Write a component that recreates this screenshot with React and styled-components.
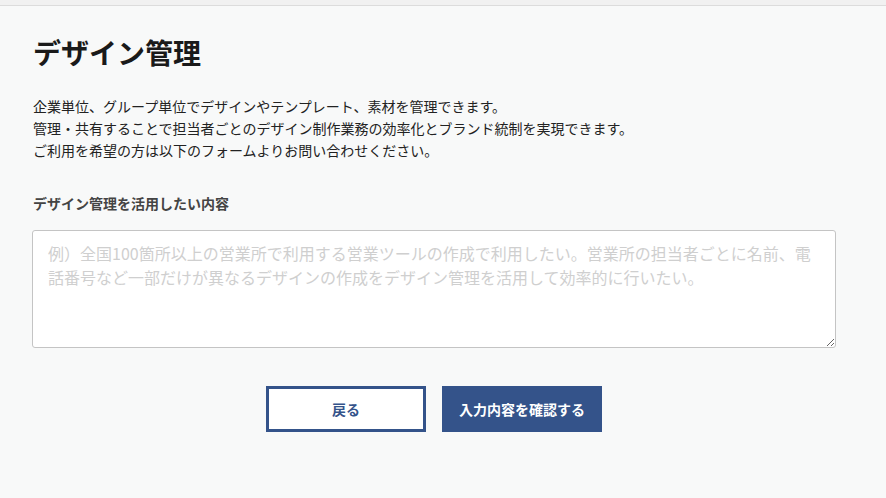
import React from "react";
import styled, { createGlobalStyle } from "styled-components";

const GlobalStyle = createGlobalStyle`
  html, body {
    margin: 0;
    padding: 0;
    background: #f8f9f9;
  }
  body {
    font-family: "Noto Sans CJK JP", "Noto Sans", sans-serif;
    color: #222;
  }
`;

const TopBar = styled.div`
  height: 5px;
  background: #f1f1f1;
  border-bottom: 1px solid #dcdcdc;
`;

const Page = styled.main`
  width: 804px;
  padding: 27px 0 40px 32px;
`;

const Title = styled.h1`
  margin: 0 0 0 1px;
  font-size: 28px;
  line-height: 39px;
  font-weight: 700;
  color: #1a1a1a;
`;

const Lead = styled.p`
  margin: 23px 0 0 1px;
  font-size: 14px;
  line-height: 22px;
  color: #222;
`;

const Label = styled.label`
  display: block;
  margin: 32px 0 0 1px;
  font-size: 14px;
  line-height: 20px;
  font-weight: 700;
  color: #444;
`;

const TextArea = styled.textarea`
  display: block;
  box-sizing: border-box;
  width: 804px;
  height: 118px;
  margin-top: 17px;
  padding: 10px 15px;
  border: 1px solid #c4c4c4;
  border-radius: 3px;
  background: #fff;
  font-family: inherit;
  font-size: 16px;
  line-height: 24px;
  color: #222;
  &::placeholder {
    color: #cfcfcf;
  }
`;

const Actions = styled.div`
  display: flex;
  justify-content: center;
  gap: 16px;
  margin-top: 38px;
`;

const Button = styled.button`
  box-sizing: border-box;
  width: 160px;
  height: 46px;
  font-family: inherit;
  font-size: 14px;
  font-weight: 700;
  cursor: pointer;
  border: 3px solid #34538a;
  background: ${(p) => (p.$primary ? "#34538a" : "#fff")};
  color: ${(p) => (p.$primary ? "#fff" : "#34538a")};
`;

export default function App() {
  return (
    <>
      <GlobalStyle />
      <TopBar />
      <Page>
        <Title>デザイン管理</Title>
        <Lead>
          企業単位、グループ単位でデザインやテンプレート、素材を管理できます。
          <br />
          管理・共有することで担当者ごとのデザイン制作業務の効率化とブランド統制を実現できます。
          <br />
          ご利用を希望の方は以下のフォームよりお問い合わせください。
        </Lead>
        <Label htmlFor="usage">デザイン管理を活用したい内容</Label>
        <TextArea
          id="usage"
          placeholder="例）全国100箇所以上の営業所で利用する営業ツールの作成で利用したい。営業所の担当者ごとに名前、電話番号など一部だけが異なるデザインの作成をデザイン管理を活用して効率的に行いたい。"
        />
        <Actions>
          <Button>戻る</Button>
          <Button $primary>入力内容を確認する</Button>
        </Actions>
      </Page>
    </>
  );
}
